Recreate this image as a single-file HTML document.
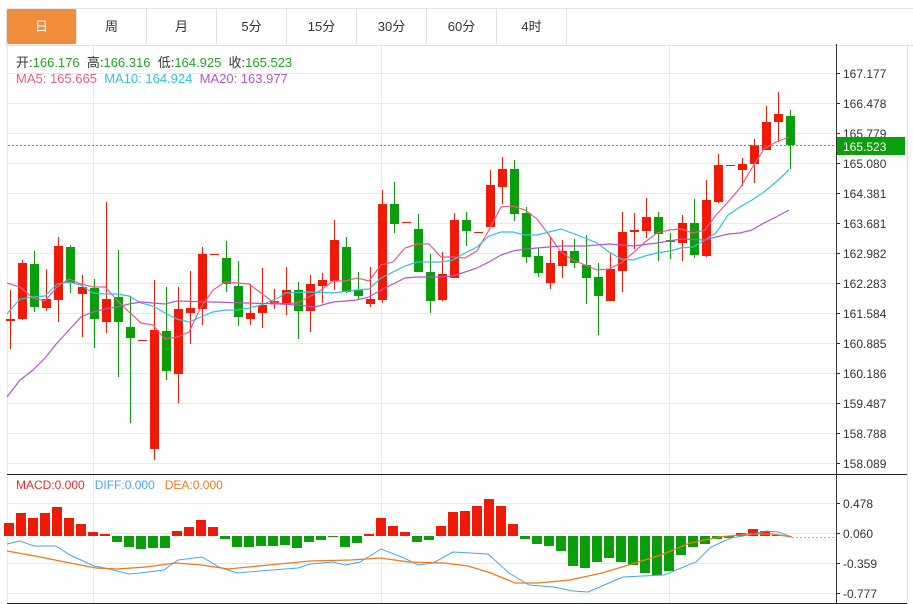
<!DOCTYPE html>
<html><head><meta charset="utf-8"><style>
html,body{margin:0;padding:0;background:#fff;}
body{width:913px;height:604px;overflow:hidden;position:relative;font-family:"Liberation Sans","Noto Sans CJK SC",sans-serif;}
.tab{position:absolute;top:9px;height:35px;width:69px;line-height:35px;text-align:center;font-size:13px;color:#333;border-right:1px solid #dfe3e8;}
svg{position:absolute;left:0;top:0;}
</style></head><body>
<div style="position:absolute;left:6px;top:8px;width:907px;height:36px;border-top:1px solid #dfe3e8;border-left:1px solid #dfe3e8;border-bottom:1px solid #dfe3e8;"></div>
<div class="tab" style="left:7px;background:#f28c3d;color:#fff;border-radius:2px;">日</div>
<div class="tab" style="left:77px">周</div>
<div class="tab" style="left:147px">月</div>
<div class="tab" style="left:217px">5分</div>
<div class="tab" style="left:287px">15分</div>
<div class="tab" style="left:357px">30分</div>
<div class="tab" style="left:427px">60分</div>
<div class="tab" style="left:497px">4时</div>
<svg id="s" width="913" height="604" xmlns="http://www.w3.org/2000/svg"></svg>
<div style="position:absolute;left:16px;top:52px;font-size:13px;color:#333;white-space:nowrap;">开:<span style="color:#1ea81e">166.176</span>&nbsp; 高:<span style="color:#1ea81e">166.316</span>&nbsp; 低:<span style="color:#1ea81e">164.925</span>&nbsp; 收:<span style="color:#1ea81e">165.523</span></div>
<div style="position:absolute;left:16px;top:71px;font-size:13px;white-space:nowrap;"><span style="color:#ee5a87">MA5: 165.665</span>&nbsp;&nbsp;<span style="color:#2ec4dc">MA10: 164.924</span>&nbsp;&nbsp;<span style="color:#b455cc">MA20: 163.977</span></div>
<div style="position:absolute;left:16px;top:478px;font-size:12px;white-space:nowrap;"><span style="color:#f02a2a">MACD:0.000</span>&nbsp;&nbsp;&nbsp;<span style="color:#45a6f0">DIFF:0.000</span>&nbsp;&nbsp;&nbsp;<span style="color:#f07a1a">DEA:0.000</span></div>
<script>
var s=document.getElementById('s'),h='';
function L(x1,y1,x2,y2,c,w,extra){h+='<line x1="'+x1+'" y1="'+y1+'" x2="'+x2+'" y2="'+y2+'" stroke="'+c+'" stroke-width="'+(w||1)+'" '+(extra||'')+'/>';}
function R(x,y,w,hh,c){h+='<rect x="'+x+'" y="'+y+'" width="'+w+'" height="'+Math.max(hh,1)+'" fill="'+c+'"/>';}
function P(pts,c,w){h+='<polyline fill="none" stroke="'+c+'" stroke-width="'+(w||1.2)+'" points="'+pts.map(p=>p.join(',')).join(' ')+'"/>';}
function T(x,y,t,c,sz){h+='<text x="'+x+'" y="'+y+'" fill="'+(c||'#333')+'" font-size="'+(sz||12)+'" font-family="Liberation Sans,sans-serif">'+t+'</text>';}
var G='#e6eaef',RED='#f01a08',GRN='#0a9e0a';
var ys=[73,103,133,163,193,223,253,283,313,343,373,403,433,463];
var lab=['167.177','166.478','165.779','165.080','164.381','163.681','162.982','162.283','161.584','160.885','160.186','159.487','158.788','158.089'];
ys.forEach((y,i)=>{L(8,y+.5,836,y+.5,G);L(836,y+.5,840,y+.5,'#333');T(843,y+5,lab[i]);});
[93,381,669].forEach(x=>L(x+.5,44,x+.5,603,G));
L(7.5,44,7.5,603,G);
var my=[503,533,563,593],ml=['0.478','0.060','-0.359','-0.777'];
my.forEach((y,i)=>{L(8,y+.5,836,y+.5,G);L(836,y+.5,840,y+.5,'#333');T(843,y+5,ml[i]);});
// candles [x?, top,bottom,high,low,red]
var C=[[319,321,290,349,1],[263,319,260,320,1],[264,307,251,312,0],[299,308,269,311,1],[246,300,237,322,1],[247,283,245,293,0],[287,294,275,337,1],[288,319,279,348,0],[299,322,202,333,1],[297,322,250,377,0],[327,338,296,423,0],[340,341,340,341,1],[330,449,280,460,1],[331,371,287,380,0],[309,374,287,403,1],[308,313,271,344,1],[254,309,247,325,1],[254,255,254,255,1],[258,284,241,292,0],[286,317,261,326,0],[313,319,284,325,1],[305,313,268,328,1],[301,304,289,309,1],[290,304,267,315,1],[290,311,282,339,0],[284,311,275,332,1],[280,286,273,303,1],[240,281,220,290,1],[247,292,237,293,0],[290,296,272,300,0],[299,304,267,307,1],[204,300,190,303,1],[204,224,182,233,0],[222,223,222,223,1],[229,272,214,272,0],[272,301,254,313,0],[274,300,252,301,1],[220,278,213,278,1],[220,231,212,246,0],[232,233,232,233,1],[185,227,170,227,1],[169,187,157,204,1],[169,214,160,221,0],[213,257,207,263,0],[256,273,248,277,0],[263,283,236,289,1],[251,266,240,278,1],[251,263,239,268,0],[265,278,235,304,0],[277,296,263,335,0],[269,301,253,301,1],[232,271,212,292,1],[230,232,213,249,1],[217,231,198,238,1],[217,234,212,261,0],[240,242,233,259,0],[223,243,215,261,1],[223,255,199,258,0],[200,256,180,257,1],[165,202,154,203,1],[165,166,165,166,1],[164,170,158,186,1],[145,164,139,183,1],[122,150,106,150,1],[114,122,92,142,1],[116,145,110,169,0]];
C.forEach((c,i)=>{var x=10+12*i,col=c[4]?RED:GRN;L(x+.5,c[2],x+.5,c[3],col);R(x-4,c[0],9,c[1]-c[0],col);});
P([[7,283],[20,287],[33,298],[45,301],[57,287],[69,279],[81,284],[93,287],[105,287],[117,300],[129,312],[141,323],[153,325],[165,339],[177,337],[189,332],[201,307],[213,290],[225,282],[237,283],[249,284],[261,293],[273,302],[283,304],[297,303],[309,297],[321,290],[333,281],[345,281],[357,278],[369,281],[381,265],[393,262],[405,248],[417,244],[429,244],[441,257],[453,257],[465,258],[477,251],[489,230],[501,207],[513,206],[525,210],[537,219],[549,235],[561,252],[573,260],[585,265],[597,270],[609,269],[621,263],[633,253],[645,242],[657,233],[669,230],[681,229],[693,233],[705,230],[716,215],[728,202],[740,188],[752,168],[764,149],[776,142],[789,137]],'#ee5a87');
P([[7,314],[20,299],[33,297],[45,296],[57,284],[69,282],[81,285],[93,293],[105,294],[117,294],[129,296],[141,303],[153,306],[165,313],[177,319],[189,322],[201,317],[213,312],[225,310],[237,310],[249,308],[261,305],[280,297],[285,293],[309,292],[333,293],[357,290],[369,289],[381,278],[393,272],[405,266],[417,262],[441,262],[453,260],[465,253],[477,247],[489,236],[501,232],[513,232],[525,235],[537,235],[549,232],[561,229],[585,238],[597,243],[609,252],[621,259],[633,260],[645,256],[657,253],[669,251],[681,248],[693,247],[705,240],[716,233],[728,215],[740,207],[752,200],[764,192],[776,182],[789,170]],'#2ec4dc');
P([[7,397],[20,380],[33,370],[45,358],[57,343],[69,330],[81,317],[93,312],[105,309],[117,307],[129,304],[141,302],[153,303],[165,304],[177,301],[280,304],[297,305],[315,307],[333,302],[357,300],[369,297],[381,290],[405,278],[417,277],[441,277],[453,276],[465,272],[477,268],[489,262],[501,255],[513,251],[525,249],[549,247],[561,246],[585,246],[609,244],[633,246],[657,243],[681,239],[704,240],[728,234],[740,233],[752,230],[764,223],[776,217],[789,210]],'#b455cc');
// price line
L(8,145.5,836,145.5,'#3cbf3c',1,'stroke-dasharray="2,2"');
R(837,137,68,18,'#0aa00a');T(843,151,'165.523','#fff',12);
// macd bars
var B=[523,513,518,513,507,518,524,532,534,542,547,549,548,548,531,527,520,527,539,547,547,546,546,545,548,542,540,537,547,543,534,518,526,532,542,540,526,512,511,506,499,506,524,539,544,546,551,566,568,562,558,562,565,573,575,571,555,547,544,539,538,533,529,531,535];
var Z=536;
B.forEach((y,i)=>{var x=10+12*i;if(y<Z)R(x-6,y,10,Z-y,RED);else R(x-6,Z,10,y-Z,GRN);});
P([[7,544],[20,541],[34,546],[56,546],[70,555],[94,566],[105,568],[129,574],[140,573],[164,570],[178,560],[202,557],[219,567],[237,573],[260,571],[298,568],[310,564],[333,562],[345,565],[360,562],[381,549],[404,558],[418,565],[433,563],[453,552],[488,554],[509,573],[529,585],[553,587],[573,591],[588,592],[602,586],[623,577],[643,576],[664,575],[696,562],[711,547],[731,538],[749,535],[766,531],[778,532],[792,537]],'#45a6f0',1);
P([[7,551],[35,556],[70,563],[96,568],[117,569],[146,567],[175,563],[202,565],[228,569],[269,565],[310,561],[351,560],[380,558],[409,562],[444,563],[468,566],[491,573],[515,583],[538,583],[570,580],[602,573],[632,564],[661,555],[690,543],[719,537],[749,534],[772,534],[792,537]],'#f07a1a',1.3);
L(792,537.5,836,537.5,'#7ec8f0',1,'stroke-dasharray="2,2"');
// axes & borders
L(836.5,44,836.5,604,'#333');
L(7,474.5,908,474.5,'#222');
L(7,603.5,908,603.5,'#222');
L(907.5,44,907.5,604,'#dfe3e8');
s.innerHTML=h;
</script>
</body></html>
